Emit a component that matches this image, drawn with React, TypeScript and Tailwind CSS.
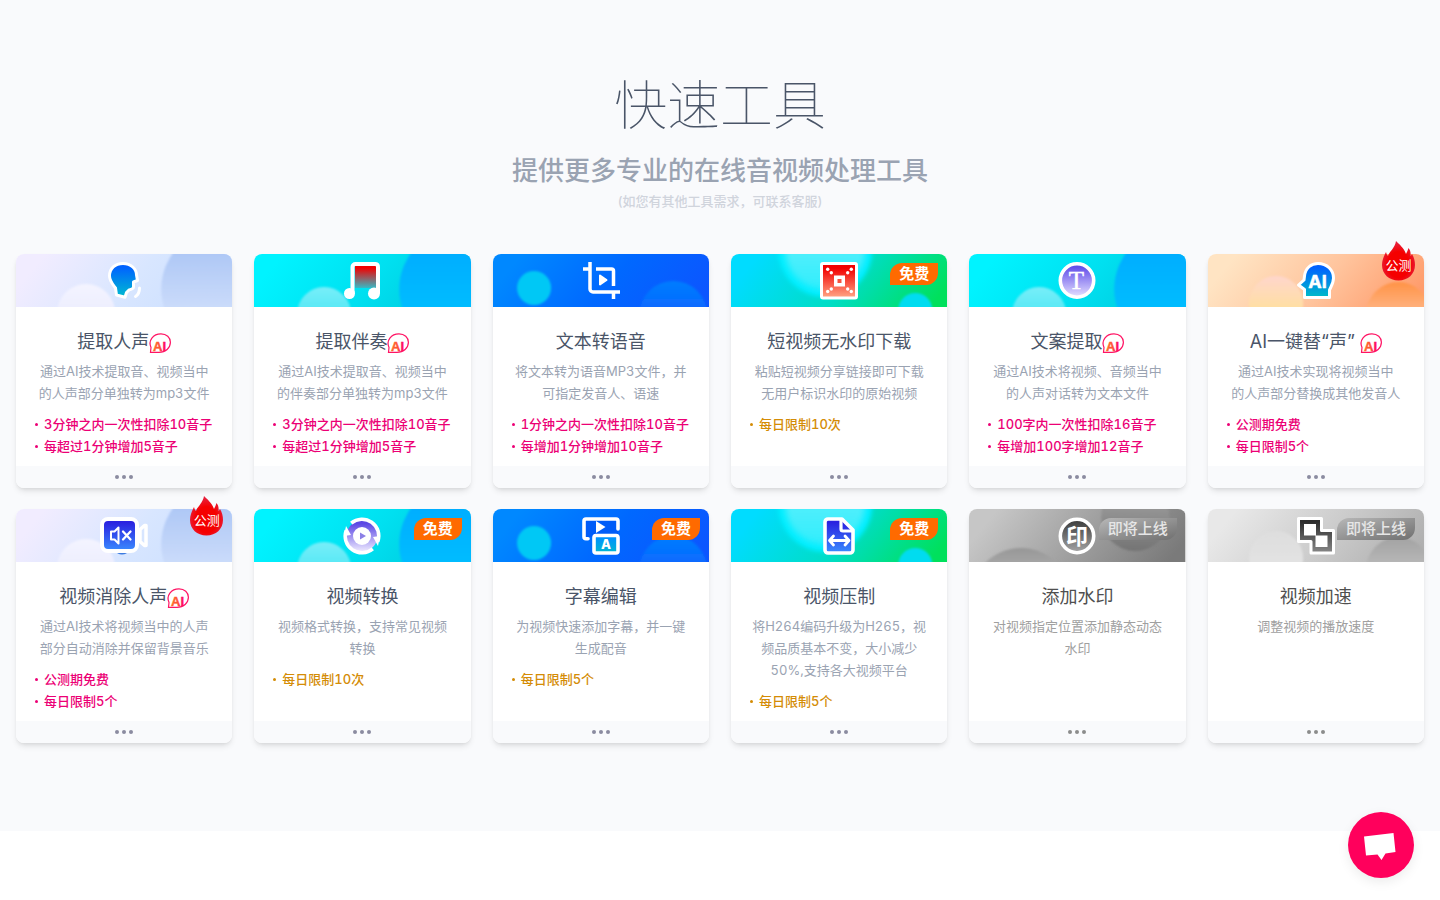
import type { ReactNode } from "react";

type BannerKind = "lavender" | "cyan" | "blue" | "green" | "orange" | "dark" | "light";

type Tool = {
  title: string;
  ai?: boolean;
  desc: string;
  notes?: string[];
  paid?: boolean;
  banner: BannerKind;
  icon: ReactNode;
  badge?: "free" | "beta" | "soon";
};

type Circle = { cx: number; cy: number; r: number; from: string; to: string; blur?: number };

const BANNERS: Record<BannerKind, { stops: string[]; circles: Circle[] }> = {
  lavender: {
    stops: ["#f1ecff", "#d8e6ff", "#cbdfff"],
    circles: [
      { cx: 206, cy: 35, r: 61, from: "#afc8f6", to: "#cadbfa" },
      { cx: 70, cy: 59, r: 29, from: "#f4f4ff", to: "#eeeffe" },
    ],
  },
  cyan: {
    stops: ["#00f3ff", "#00e0f0", "#00c8dc"],
    circles: [
      { cx: 206, cy: 35, r: 61, from: "#00aeff", to: "#00bcff" },
      { cx: 70, cy: 60, r: 27, from: "#78eef9", to: "#5ce9f6" },
    ],
  },
  blue: {
    stops: ["#0088ff", "#0068ff", "#0c56ff"],
    circles: [
      { cx: 41, cy: 34, r: 17, from: "#00c8f5", to: "#00c8f5" },
      { cx: 180, cy: 61, r: 34, from: "#007dff", to: "#0a6bff" },
    ],
  },
  green: {
    stops: ["#00dcff", "#00ddc4", "#00e05c"],
    circles: [
      { cx: 94, cy: -4, r: 47, from: "#00eeff", to: "#00eeff", blur: 2 },
      { cx: 94, cy: -4, r: 40, from: "#4eeffc", to: "#30edfc", blur: 3 },
      { cx: 184, cy: 56, r: 17, from: "#00dcf0", to: "#00dcf0" },
    ],
  },
  orange: {
    stops: ["#ffe4c3", "#ffc49d", "#ff9c6c"],
    circles: [
      { cx: 68, cy: 49, r: 27, from: "#ffd6cc", to: "#ffdfa4" },
      { cx: 190, cy: 60, r: 32, from: "#ff9346", to: "#ffb07c" },
    ],
  },
  dark: {
    stops: ["#c6c6c6", "#9e9e9e", "#7a7a7a"],
    circles: [
      { cx: 52, cy: 90, r: 51, from: "#979797", to: "#a4a4a4" },
      { cx: 166, cy: 8, r: 34, from: "#949494", to: "#747474" },
    ],
  },
  light: {
    stops: ["#e8e8e8", "#cccccc", "#b0b0b0"],
    circles: [
      { cx: 68, cy: 49, r: 27, from: "#dedede", to: "#e2e2e2" },
      { cx: 190, cy: 60, r: 32, from: "#a2a2a2", to: "#b6b6b6" },
    ],
  },
};

function Banner({ kind, id }: { kind: BannerKind; id: string }) {
  const { stops, circles } = BANNERS[kind];
  return (
    <svg
      className="absolute inset-0 h-full w-full"
      viewBox="0 0 216 53"
      preserveAspectRatio="xMidYMid slice"
      aria-hidden="true"
    >
      <defs>
        <linearGradient id={id} x1="0" y1="0.4" x2="1" y2="0.6">
          <stop offset="0.05" stopColor={stops[0]} />
          <stop offset="0.55" stopColor={stops[1]} />
          <stop offset="1" stopColor={stops[2]} />
        </linearGradient>
        {circles.map((c, i) => (
          <g key={i}>
            <linearGradient
              id={`${id}-g${i}`}
              gradientUnits="userSpaceOnUse"
              x1="0"
              x2="0"
              y1={Math.max(0, c.cy - c.r)}
              y2={Math.min(53, c.cy + c.r)}
            >
              <stop stopColor={c.from} />
              <stop offset="1" stopColor={c.to} />
            </linearGradient>
            <filter id={`${id}-f${i}`}>
              <feGaussianBlur stdDeviation={c.blur ?? 1} />
            </filter>
          </g>
        ))}
      </defs>
      <rect width="216" height="53" fill={`url(#${id})`} />
      {circles.map((c, i) => (
        <circle
          key={i}
          cx={c.cx}
          cy={c.cy}
          r={c.r}
          fill={`url(#${id}-g${i})`}
          filter={`url(#${id}-f${i})`}
        />
      ))}
    </svg>
  );
}

function Icon({
  id,
  from,
  to,
  width = 38,
  children,
}: {
  id: string;
  from: string;
  to: string;
  width?: number;
  children: ReactNode;
}) {
  return (
    <svg
      className="relative h-[38px] shrink-0 overflow-visible"
      width={width}
      viewBox={`0 0 ${width} 38`}
      fill="none"
      aria-hidden="true"
    >
      <defs>
        <linearGradient id={id} x1="0" y1="0" x2="0" y2="1">
          <stop offset="0.1" stopColor={from} />
          <stop offset="1" stopColor={to} />
        </linearGradient>
      </defs>
      {children}
    </svg>
  );
}

const voiceIcon = (
  <Icon id="i-voice" from="#0062ff" to="#00bcd0">
    <path
      d="M4.500 14C4.500 6.500 10 1.500 18 1.500C26 1.500 31.500 7 31.500 13L32.500 18.500L28.500 20V25C28.500 27 26 27.500 24 28L21.500 30.500L20 35.200L11.500 33L10.500 26C7.500 22 4.500 19 4.500 14Z"
      fill="url(#i-voice)"
      stroke="#fff"
      strokeWidth="3"
      strokeLinejoin="round"
    />
    <path d="M34.500 26C34.500 30 33 33 30.500 34.500" stroke="#fff" strokeWidth="3" strokeLinecap="round" />
  </Icon>
);

const musicIcon = (
  <Icon id="i-music" from="#f20000" to="#38b8c4">
    <path d="M12 3.500H33V26H12Z" fill="url(#i-music)" />
    <path d="M9.500 31V5A3 3 0 0 1 12.500 2H32.500A3 3 0 0 1 35 5V31" stroke="#fff" strokeWidth="4" />
    <circle cx="6.500" cy="31.500" r="5.500" fill="#fff" />
    <circle cx="31" cy="31.500" r="6" fill="#fff" />
  </Icon>
);

const cropIcon = (
  <Icon id="i-crop" from="#fff" to="#fff">
    <path d="M8 0V27A3 3 0 0 0 11 30H38" stroke="#fff" strokeWidth="3.500" />
    <path d="M1 7H8M14 7H29.500A2 2 0 0 1 31.500 9V24M31.500 30V37" stroke="#fff" strokeWidth="3.500" />
    <path d="M18 13.500L24.500 18L18 22.500Z" fill="#fff" stroke="#fff" strokeWidth="2" strokeLinejoin="round" />
  </Icon>
);

const downloadIcon = (
  <Icon id="i-down" from="#f20000" to="#ffa080">
    <rect width="38" height="37.500" rx="3" fill="#fff" />
    <rect x="3" y="3" width="32" height="31.500" fill="url(#i-down)" />
    <rect x="14" y="13.500" width="11" height="11" fill="#fff" />
    <rect x="17.500" y="17" width="4" height="4" fill="#f6513f" />
    <g fill="#fff">
      <circle cx="7.700" cy="7.300" r="1.700" />
      <circle cx="11.300" cy="10.800" r="1.700" />
      <circle cx="31.300" cy="7.300" r="1.700" />
      <circle cx="27.700" cy="10.800" r="1.700" />
      <circle cx="7.700" cy="29.500" r="1.700" />
      <circle cx="11.300" cy="27" r="1.700" />
      <circle cx="31.300" cy="29.500" r="1.700" />
      <circle cx="27.700" cy="27" r="1.700" />
    </g>
  </Icon>
);

const textIcon = (
  <Icon id="i-text" from="#6450ea" to="#e6e2ff">
    <circle cx="19" cy="18.500" r="16.700" fill="url(#i-text)" stroke="#fff" strokeWidth="3.600" />
    <text
      x="18.500"
      y="27"
      textAnchor="middle"
      fill="#fff"
      stroke="#fff"
      strokeWidth="0.500"
      fontFamily="Liberation Serif, serif"
      fontSize="25"
    >
      T
    </text>
  </Icon>
);

const aiHeadIcon = (
  <Icon id="i-ai" from="#0060ff" to="#00bcc8">
    <path
      d="M7.500 14C8.500 6 14 1.500 21 1.500C30 1.500 36.500 8 36.500 16C36.500 21 34 24.500 32.500 28V35.500H7.500V27.500L1.500 23L7 18Z"
      fill="url(#i-ai)"
      stroke="#fff"
      strokeWidth="3"
      strokeLinejoin="round"
    />
    <text
      x="20.500"
      y="26"
      textAnchor="middle"
      fill="#fff"
      stroke="#fff"
      strokeWidth="0.500"
      strokeLinejoin="round"
      fontFamily="Inter, sans-serif"
      fontSize="18"
      fontWeight="700"
    >
      AI
    </text>
  </Icon>
);

const muteIcon = (
  <Icon id="i-mute" from="#2a22e0" to="#3a8cff" width={48}>
    <ellipse cx="22" cy="34" rx="6" ry="3.500" fill="#3c7be0" />
    <rect x="2" y="2" width="35" height="32" rx="6" fill="url(#i-mute)" stroke="#fff" strokeWidth="4" />
    <path
      d="M40 12.500L44.500 8.500H46V28.500H44.500L40 24.500Z"
      stroke="#fff"
      strokeWidth="3.500"
      strokeLinejoin="round"
    />
    <path d="M11 14.500V22.500H14.500L18.500 26.500V10.500L14.500 14.500Z" stroke="#fff" strokeWidth="2" strokeLinejoin="round" />
    <path d="M23 14.500L30.500 22.500M30.500 14.500L23 22.500" stroke="#fff" strokeWidth="2.300" strokeLinecap="round" />
  </Icon>
);

const convertIcon = (
  <Icon id="i-conv" from="#5c48e4" to="#eeeaff">
    <circle cx="19" cy="19" r="15.500" fill="url(#i-conv)" />
    <path d="M8.200 6.100A16.800 16.800 0 0 1 34.800 24.700" stroke="#fff" strokeWidth="3.500" />
    <path d="M29.800 31.900A16.800 16.800 0 0 1 3.200 13.300" stroke="#fff" strokeWidth="3.500" />
    <path d="M3 9L8 18L1 19Z" fill="#fff" />
    <path d="M35 29L30 20L37 19Z" fill="#fff" />
    <circle cx="19" cy="19" r="9" fill="#fff" />
    <path d="M17 15.500L23 19L17 22.500Z" fill="#8c80e6" />
  </Icon>
);

const subtitleIcon = (
  <Icon id="i-sub" from="#0090ff" to="#00b8d0">
    <path d="M2 2H36V20H2Z" fill="#005cf8" />
    <path
      d="M6 21.800H4A2 2 0 0 1 2 19.800V4A2 2 0 0 1 4 2H34A2 2 0 0 1 36 4V12"
      stroke="#fff"
      strokeWidth="3.600"
      strokeLinecap="round"
    />
    <path d="M14 4V16L23.500 10Z" fill="#fff" />
    <rect x="12" y="18.500" width="24" height="17.500" rx="2" fill="url(#i-sub)" stroke="#fff" strokeWidth="3.600" />
    <text
      x="24"
      y="32"
      textAnchor="middle"
      fill="#fff"
      fontFamily="Inter, sans-serif"
      fontSize="13"
      fontWeight="800"
    >
      A
    </text>
  </Icon>
);

const compressIcon = (
  <Icon id="i-comp" from="#2a22e0" to="#3a8cff">
    <path
      d="M8 2H22L33 13V33A3 3 0 0 1 30 36H8A3 3 0 0 1 5 33V5A3 3 0 0 1 8 2Z"
      fill="url(#i-comp)"
      stroke="#fff"
      strokeWidth="3.600"
      strokeLinejoin="round"
    />
    <path d="M21 3V12A2 2 0 0 0 23 14H32" stroke="#fff" strokeWidth="3.200" />
    <path
      d="M10 23.500H28.500M13.500 19L9.500 23.500L13.500 28M25 19L29 23.500L25 28"
      stroke="#fff"
      strokeWidth="2.800"
      strokeLinecap="round"
      strokeLinejoin="round"
    />
  </Icon>
);

const stampIcon = (
  <Icon id="i-stamp" from="#444" to="#a6a6a6">
    <circle cx="19" cy="19" r="16.700" fill="url(#i-stamp)" stroke="#fff" strokeWidth="3.600" />
    <text
      x="19"
      y="27"
      textAnchor="middle"
      fill="#fff"
      fontFamily="Noto Sans CJK SC, sans-serif"
      fontSize="22"
      fontWeight="700"
    >
      印
    </text>
  </Icon>
);

const speedIcon = (
  <Icon id="i-speed" from="#2e2e2e" to="#888">
    <path
      d="M1.500 1.500H24.500V13.500H36.500V36H14V24.500H1.500Z"
      fill="url(#i-speed)"
      stroke="#fff"
      strokeWidth="3"
      strokeLinejoin="round"
    />
    <path d="M7 7H19V18.500H30.500V30H18.500V18.500H7Z" fill="#fff" />
  </Icon>
);

const TOOLS: Tool[] = [
  {
    title: "提取人声",
    ai: true,
    desc: "通过AI技术提取音、视频当中\n的人声部分单独转为mp3文件",
    notes: ["3分钟之内一次性扣除10音子", "每超过1分钟增加5音子"],
    paid: true,
    banner: "lavender",
    icon: voiceIcon,
  },
  {
    title: "提取伴奏",
    ai: true,
    desc: "通过AI技术提取音、视频当中\n的伴奏部分单独转为mp3文件",
    notes: ["3分钟之内一次性扣除10音子", "每超过1分钟增加5音子"],
    paid: true,
    banner: "cyan",
    icon: musicIcon,
  },
  {
    title: "文本转语音",
    desc: "将文本转为语音MP3文件，并\n可指定发音人、语速",
    notes: ["1分钟之内一次性扣除10音子", "每增加1分钟增加10音子"],
    paid: true,
    banner: "blue",
    icon: cropIcon,
  },
  {
    title: "短视频无水印下载",
    desc: "粘贴短视频分享链接即可下载\n无用户标识水印的原始视频",
    notes: ["每日限制10次"],
    banner: "green",
    icon: downloadIcon,
    badge: "free",
  },
  {
    title: "文案提取",
    ai: true,
    desc: "通过AI技术将视频、音频当中\n的人声对话转为文本文件",
    notes: ["100字内一次性扣除16音子", "每增加100字增加12音子"],
    paid: true,
    banner: "cyan",
    icon: textIcon,
  },
  {
    title: "AI一键替“声” ",
    ai: true,
    desc: "通过AI技术实现将视频当中\n的人声部分替换成其他发音人",
    notes: ["公测期免费", "每日限制5个"],
    paid: true,
    banner: "orange",
    icon: aiHeadIcon,
    badge: "beta",
  },
  {
    title: "视频消除人声",
    ai: true,
    desc: "通过AI技术将视频当中的人声\n部分自动消除并保留背景音乐",
    notes: ["公测期免费", "每日限制5个"],
    paid: true,
    banner: "lavender",
    icon: muteIcon,
    badge: "beta",
  },
  {
    title: "视频转换",
    desc: "视频格式转换，支持常见视频\n转换",
    notes: ["每日限制10次"],
    banner: "cyan",
    icon: convertIcon,
    badge: "free",
  },
  {
    title: "字幕编辑",
    desc: "为视频快速添加字幕，并一键\n生成配音",
    notes: ["每日限制5个"],
    banner: "blue",
    icon: subtitleIcon,
    badge: "free",
  },
  {
    title: "视频压制",
    desc: "将H264编码升级为H265，视\n频品质基本不变，大小减少\n50%,支持各大视频平台",
    notes: ["每日限制5个"],
    banner: "green",
    icon: compressIcon,
    badge: "free",
  },
  {
    title: "添加水印",
    desc: "对视频指定位置添加静态动态\n水印",
    banner: "dark",
    icon: stampIcon,
    badge: "soon",
  },
  {
    title: "视频加速",
    desc: "调整视频的播放速度",
    banner: "light",
    icon: speedIcon,
    badge: "soon",
  },
];

function AiMark() {
  return (
    <svg
      className="mt-1 h-5 w-[22px] shrink-0 overflow-visible"
      viewBox="0 0 22 20"
      fill="none"
      aria-label="AI"
    >
      <defs>
        <linearGradient id="ai-mark" x1="0" x2="1">
          <stop offset="0.1" stopColor="#ff6a2a" />
          <stop offset="0.6" stopColor="#ff4a3a" />
          <stop offset="0.7" stopColor="#ff1060" />
        </linearGradient>
      </defs>
      <path
        d="M1.500 19.300L2 14.500C-1 7.500 4 0.800 12 0.800C17.500 0.800 21.400 4.500 21.400 9.300C21.400 15 16.500 19.300 10 19.300Z"
        stroke="#ff1464"
        strokeWidth="1.200"
      />
      <text
        x="4"
        y="17.500"
        fill="url(#ai-mark)"
        stroke="url(#ai-mark)"
        strokeWidth="0.400"
        fontFamily="Liberation Sans, sans-serif"
        fontSize="13"
        fontWeight="700"
      >
        AI
      </text>
    </svg>
  );
}

function Badge({ kind, id }: { kind: NonNullable<Tool["badge"]>; id: string }) {
  if (kind === "beta") {
    return (
      <span className="absolute -top-[14px] right-2 flex h-[41px] w-[35px] items-end justify-center pb-[6px]">
        <svg className="absolute inset-0 h-full w-full" viewBox="0 0 35 41" aria-hidden="true">
          <defs>
            <radialGradient id={id} cx="0.5" cy="0.6" r="0.55">
              <stop offset="0.6" stopColor="#f50000" />
              <stop offset="1" stopColor="#e6203c" />
            </radialGradient>
          </defs>
          <path
            d="M15 1C18 4 23 8 25 14C26 12 27 10 27.500 8C29 10 30 12 29.500 16C30 15.500 30.500 15 31 14C33 17 34 21 34 25C34 34 27 40.500 17.500 40.500C8 40.500 1 34 1 25C1 20 3 16 5 12C5.500 14 6 15 7 16C8 12 14 8 15 1Z"
            fill={`url(#${id})`}
          />
        </svg>
        <span className="relative text-[13px] leading-5 text-white">公测</span>
      </span>
    );
  }
  if (kind === "soon") {
    return (
      <span className="absolute top-[9px] right-[9px] h-[22px] rounded-tl-xl rounded-br-xl bg-linear-to-br from-[#b8b8b8] to-[#707070] px-[9px] text-[15px] leading-[22px] font-medium text-[#e6e6e6]">
        即将上线
      </span>
    );
  }
  return (
    <span className="absolute top-[9px] right-[9px] h-[22px] rounded-tl-xl rounded-br-xl bg-[#ff6a00] px-[9px] text-[15px] leading-[22px] font-bold text-white">
      免费
    </span>
  );
}

function ToolCard({ tool, index }: { tool: Tool; index: number }) {
  const soon = tool.badge === "soon";
  return (
    <article className="relative flex flex-col rounded-lg bg-white shadow-md">
      <div className="relative flex h-[53px] items-center justify-center overflow-hidden rounded-t-lg">
        <Banner kind={tool.banner} id={`banner-${index}`} />
        {tool.icon}
      </div>
      {tool.badge && <Badge kind={tool.badge} id={`badge-${index}`} />}

      <div className="flex-1 pt-[22px] pb-[9px]">
        <h3
          className={`flex justify-center text-[18px] leading-[26px] whitespace-pre ${soon ? "text-[#4f4f4f]" : "text-[#4a5568]"}`}
        >
          {tool.title}
          {tool.ai && <AiMark />}
        </h3>
        <p
          className={`mt-[5px] text-center text-[13px] leading-[22px] whitespace-pre-line tabular-nums ${soon ? "text-[#a0a0a0]" : "text-[#9aa3b2]"}`}
        >
          {tool.desc}
        </p>
        {tool.notes && (
          <ul
            className={`mt-[9px] px-[19px] text-[13px] leading-[22px] font-medium whitespace-nowrap tabular-nums ${tool.paid ? "text-[#ec0075]" : "text-[#d48c06]"}`}
          >
            {tool.notes.map((note) => (
              <li key={note} className="flex items-center gap-[6px]">
                <span className="h-[3px] w-[3px] rounded-full bg-current" />
                {note}
              </li>
            ))}
          </ul>
        )}
      </div>

      <button
        type="button"
        aria-label={`${tool.title}更多`}
        className={`flex h-[22px] items-center justify-center gap-[3px] rounded-b-lg bg-[#f9fafc] ${soon ? "text-[#8c8c8c]" : "text-[#8b8ba0]"}`}
      >
        <span className="h-1 w-1 rounded-full bg-current" />
        <span className="h-1 w-1 rounded-full bg-current" />
        <span className="h-1 w-1 rounded-full bg-current" />
      </button>
    </article>
  );
}

export default function App() {
  return (
    <div className="min-h-screen bg-white font-['Inter','Noto_Sans_CJK_SC',sans-serif]">
      <section className="bg-[#f9fafc] px-4 pt-[69px] pb-22">
        <header className="text-center">
          <h1 className="font-['Noto_Sans_CJK_SC',sans-serif] text-[53px] leading-[66px] font-thin text-[#4a5568]">
            快速工具
          </h1>
          <h2 className="mt-[19px] text-[26px] leading-[34px] font-medium text-[#9aa3b2]">
            提供更多专业的在线音视频处理工具
          </h2>
          <p className="mt-[2px] text-[13px] leading-[22px] font-medium text-[#d0d4dc]">
            (如您有其他工具需求，可联系客服)
          </p>
        </header>

        <div className="mt-[42px] grid grid-cols-2 gap-x-[22px] gap-y-[21px] md:grid-cols-3 lg:grid-cols-6">
          {TOOLS.map((tool, i) => (
            <ToolCard key={tool.title} tool={tool} index={i} />
          ))}
        </div>
      </section>

      <button
        type="button"
        aria-label="联系客服"
        className="fixed right-[26px] bottom-[22px] h-[66px] w-[66px] rounded-full bg-[#ff005c] shadow-[0_4px_12px_rgba(0,0,0,0.08)]"
      >
        <svg viewBox="0 0 66 66" fill="#fff" aria-hidden="true">
          <path d="M16 24.500L45.500 21L47.500 40L37.500 41.500L33.500 48L29.500 42.500L18 43.500Z" />
        </svg>
      </button>
    </div>
  );
}
